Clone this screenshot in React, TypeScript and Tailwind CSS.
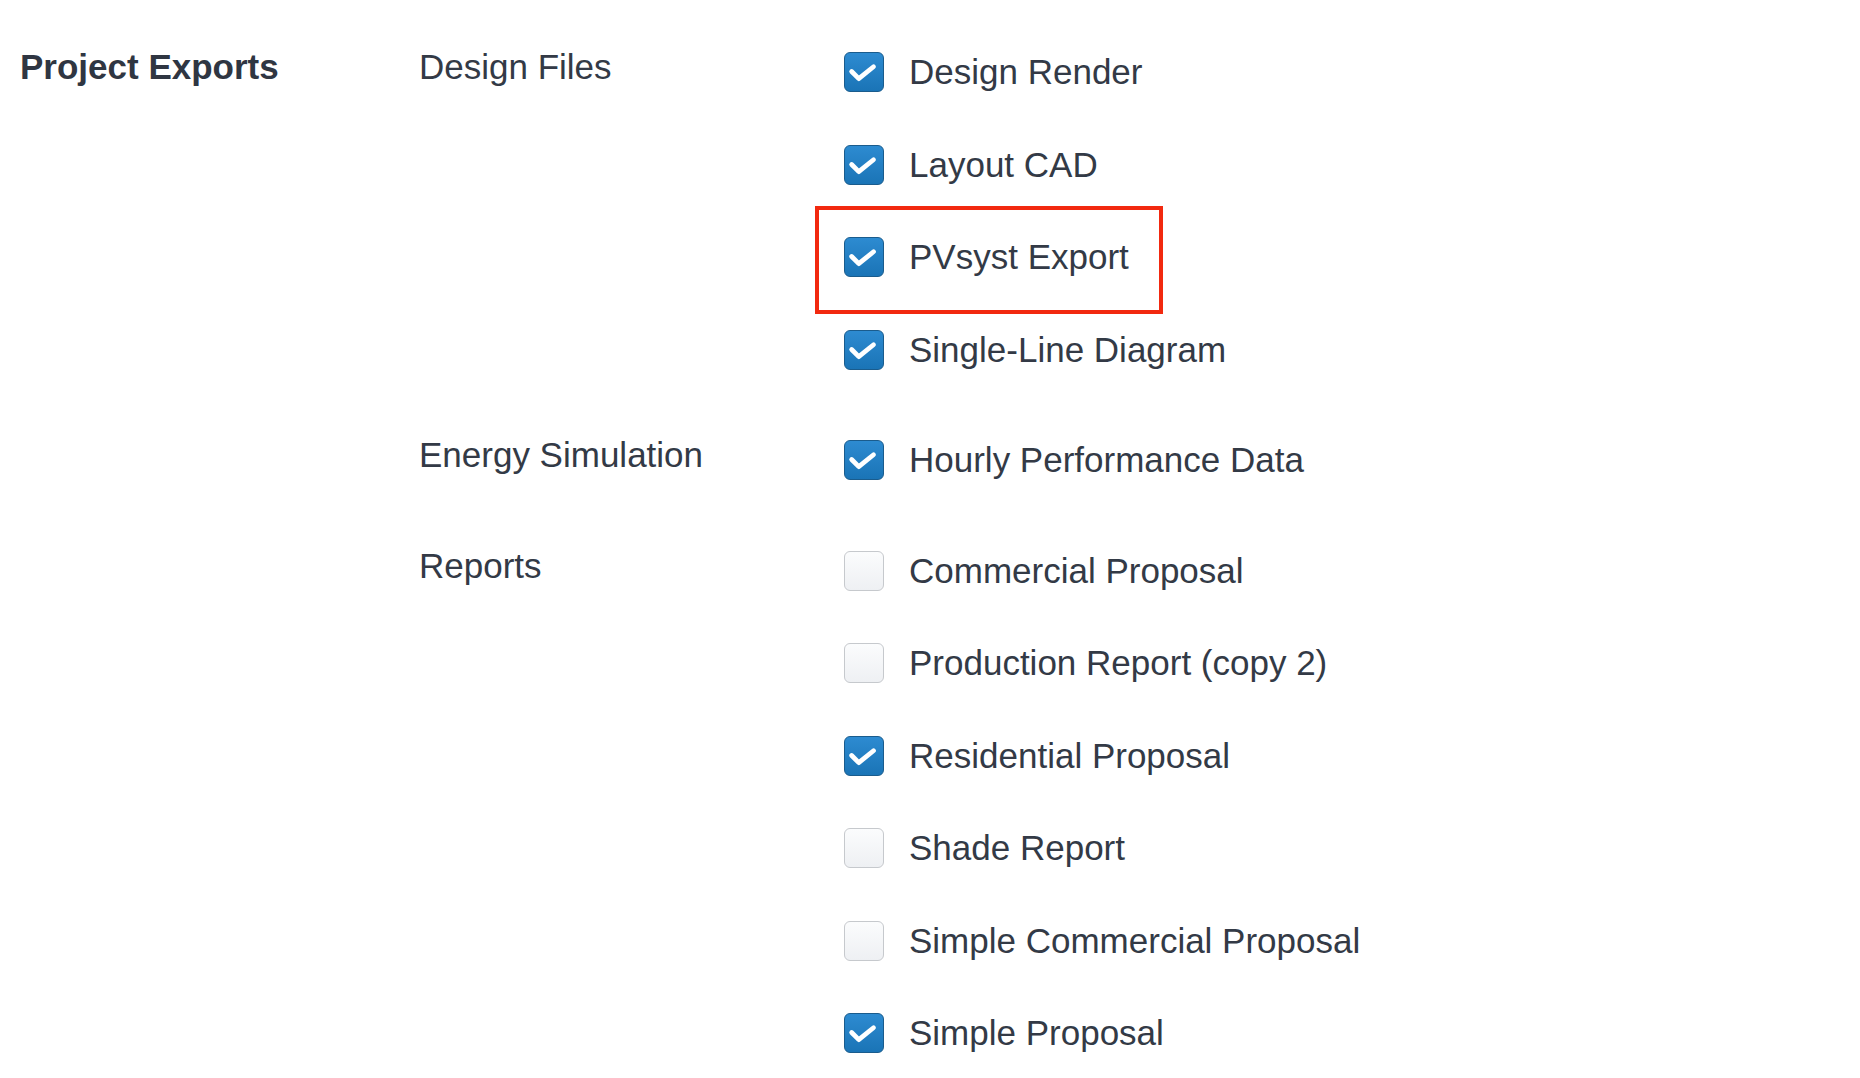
const groups = [
  {
    label: "Design Files",
    items: [
      { name: "Design Render", checked: true },
      { name: "Layout CAD", checked: true },
      { name: "PVsyst Export", checked: true, highlight: true },
      { name: "Single-Line Diagram", checked: true },
    ],
  },
  {
    label: "Energy Simulation",
    items: [{ name: "Hourly Performance Data", checked: true }],
  },
  {
    label: "Reports",
    items: [
      { name: "Commercial Proposal", checked: false },
      { name: "Production Report (copy 2)", checked: false },
      { name: "Residential Proposal", checked: true },
      { name: "Shade Report", checked: false },
      { name: "Simple Commercial Proposal", checked: false },
      { name: "Simple Proposal", checked: true },
    ],
  },
];

function Checkbox({ checked }: { checked: boolean }) {
  if (!checked) {
    return (
      <div className="w-[40px] h-[40px] shrink-0 rounded-[6px] border-[1.5px] border-[#c6c9cd] bg-gradient-to-b from-[#fbfcfd] to-[#eef0f3]" />
    );
  }
  return (
    <div className="w-[40px] h-[40px] shrink-0 rounded-[6px] border-[1.5px] border-[#1a5c8d] bg-gradient-to-b from-[#2d8bd1] to-[#1a74b6] flex items-center justify-center">
      <svg width="40" height="40" viewBox="0 0 40 40" fill="none">
        <path
          d="M7 19.5 L14.5 27 L30 14.5"
          stroke="white"
          strokeWidth="5"
          strokeLinecap="round"
          strokeLinejoin="round"
        />
      </svg>
    </div>
  );
}

export default function App() {
  return (
    <div
      className="min-h-screen bg-white text-[#333a46] pl-[20px] pt-[52px]"
      style={{ fontFamily: '"Liberation Sans", Arial, sans-serif' }}
    >
      <div className="flex">
        <h2 className="w-[399px] shrink-0 text-[35px] leading-[30px] font-bold text-[#2f3642]">
          Project Exports
        </h2>
        <div className="flex flex-col gap-[70.5px]">
          {groups.map((g) => (
            <div key={g.label} className="flex">
              <div className="w-[425px] shrink-0 text-[35px] leading-[30px]">{g.label}</div>
              <div className="flex flex-col gap-[52.5px]">
                {g.items.map((it) => (
                  <div key={it.name} className="relative h-[40px] flex items-center gap-[25px]">
                    <Checkbox checked={it.checked} />
                    <span className="text-[35px] leading-[40px] whitespace-nowrap">{it.name}</span>
                    {it.highlight && (
                      <div className="absolute -left-[29px] -top-[31px] w-[348px] h-[108px] border-[4px] border-[#f2290f] pointer-events-none" />
                    )}
                  </div>
                ))}
              </div>
            </div>
          ))}
        </div>
      </div>
    </div>
  );
}
